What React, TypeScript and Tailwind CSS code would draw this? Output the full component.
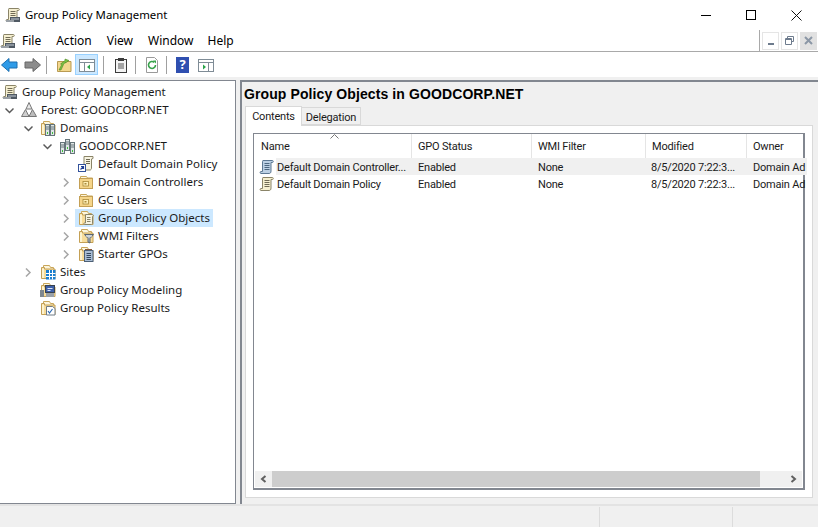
import type {ReactNode} from 'react'

const Icon = ({children, className = ''}: {children: ReactNode; className?: string}) => (
  <svg width="16" height="16" viewBox="0 0 16 16" className={`shrink-0 ${className}`}>
    {children}
  </svg>
)

const Scroll = ({fill = '#f5efd0', stroke = '#8a8468', line = '#6f6a55'}) => (
  <>
    <path d="M4 1.500h9.500c1 0 1 2 0 2H12V12c0 2-1 2.500-2 2.500H2c-1.200 0-1.200-2 0-2h1.500V3c0-1 .2-1.500.5-1.500z" fill={fill} stroke={stroke} />
    <path d="M5.500 4.500h5M5.500 6.500h5M5.500 8.500h5M5.500 10.500h5" stroke={line} />
  </>
)

const RootIcon = () => (
  <Icon>
    <Scroll />
    <rect x="5" y="10" width="10" height="5" fill="#4f5963" />
    <path d="M6 12h8" stroke="#c6ced6" />
    <rect x="1" y="13" width="8" height="2" fill="#9aa0a6" />
  </Icon>
)

const Folder = ({children, tone = '#f7dc9a'}: {children?: ReactNode; tone?: string}) => (
  <Icon>
    <path d="M3.500 1.500h6l1 2h3v3h-10z" fill="#fdf6dd" stroke="#c9a65a" />
    <path d="M1.500 3.500h3v1.500h10.500v9.500H1.500z" fill={tone} stroke="#c4a055" />
    <path d="M2 4.500v9.500h2V4.500z" fill="#fdf3d0" />
    {children}
  </Icon>
)

const ForestIcon = () => (
  <Icon>
    <path d="M8 .5l3 6.500H5z" fill="#e9e9e9" stroke="#777" />
    <path d="M4.500 7.500l3.500 7H.5z" fill="#cfcfcf" stroke="#777" />
    <path d="M11.500 7.500l4 7H8z" fill="#bdbdbd" stroke="#777" />
  </Icon>
)

const Server = ({x, y = 3}: {x: number; y?: number}) => (
  <g>
    <rect x={x + 0.5} y={y + 0.5} width="4" height={11} fill="#dfe6e6" stroke="#66757a" />
    <path d={`M${x + 1} ${y + 3}h3M${x + 1} ${y + 5}h3`} stroke="#66757a" />
    <rect x={x + 2} y={y + 8} width="1" height="2" fill="#3bc23b" />
  </g>
)

const DomainIcon = () => (
  <Icon>
    <Server x={1} y={4} />
    <Server x={6} y={1} />
    <Server x={11} y={4} />
  </Icon>
)

const DomainsIcon = () => (
  <Folder>
    <Server x={5} y={4} />
    <Server x={10} y={4} />
  </Folder>
)

const OuIcon = () => (
  <Icon>
    <path d="M2.500 2.500h6l1 1.500h5v2h-12z" fill="#fdf6dd" stroke="#c9a65a" />
    <rect x="1.500" y="4.500" width="13" height="10" fill="#f5d58a" stroke="#c4a055" />
    <rect x="5" y="7.500" width="5.500" height="4.500" fill="#fff0b8" stroke="#a98838" strokeWidth=".8" />
    <rect x="6.500" y="9" width="2" height="1.500" fill="#a98838" />
  </Icon>
)

const GpoFolderIcon = () => (
  <Folder>
    <path d="M7.500 4.500h7c1 0 1 2 0 2v6.500c0 1-.5 1.500-1 1.500H6.500c-1 0-1-1.500 0-1.500h1z" fill="#f7f4e2" stroke="#8a8468" />
    <path d="M9 7.500h3.500M9 9.500h3.500M9 11.500h3.500" stroke="#8a8468" />
  </Folder>
)

const WmiIcon = () => (
  <Folder>
    <path d="M6.500 6.500h9l-3.500 4v4.500l-2-1v-3.500z" fill="#b6bec7" stroke="#5b6670" />
    <path d="M8 8h6" stroke="#e6eaee" />
  </Folder>
)

const StarterIcon = () => (
  <Folder>
    <rect x="6.500" y="4.500" width="8.500" height="11" fill="#a9bdd4" stroke="#4c5f75" />
    <path d="M8.500 7.500h4.500M8.500 9.500h4.500M8.500 11.500h4.500M8.500 13.500h4.500" stroke="#33475e" />
    <path d="M7 3.500h7" stroke="#8a5a3c" />
  </Folder>
)

const SitesIcon = () => (
  <Folder>
    <rect x="6" y="6" width="9.500" height="9.500" fill="#1a7fd0" />
    <path d="M6 9.500h9.500M6 12.500h9.500M9.500 6v9.500M12.500 6v9.500" stroke="#fff" />
  </Folder>
)

const ModelingIcon = () => (
  <Folder>
    <rect x="5.500" y="3.500" width="9" height="7" fill="#3d5fa8" stroke="#39424d" />
    <path d="M7.500 6.500h5M7.500 8.500h3" stroke="#dbe5f5" />
    <rect x="0" y="8" width="4" height="7" fill="#7f888f" />
    <rect x="6" y="11" width="8" height="4" fill="#9aa1a8" />
  </Folder>
)

const ResultsIcon = () => (
  <Folder>
    <path d="M6.500 6.500h6l2.500 2v6.500H6.500z" fill="#fff" stroke="#6f7a85" />
    <path d="M8 11l1.500 2 3-4" fill="none" stroke="#2f6db5" strokeWidth="1.200" />
  </Folder>
)

const ShortcutGpoIcon = () => (
  <Icon>
    <path d="M6 .5h9v2l-1.500.5V12c0 1-.5 2-1.500 2H6z" fill="#f7f4e2" stroke="#8a8468" />
    <path d="M8 3.500h4M8 5.500h4M8 7.500h4" stroke="#6f6a55" />
    <rect x=".5" y="8.500" width="7" height="7" fill="#fff" stroke="#33529b" />
    <path d="M2.500 13.500l3-3M3 10.500h2.500v2.500" fill="none" stroke="#1f3f94" strokeWidth="1.200" />
  </Icon>
)

const Chevron = ({open}: {open?: boolean}) => (
  <svg width="9" height="9" viewBox="0 0 9 9" fill="none" strokeWidth="1.500" stroke={open ? '#5a5a5a' : '#a6a6a6'}>
    {open ? <path d="M.5 2.500l4 4 4-4" /> : <path d="M2 .5l4 4-4 4" />}
  </svg>
)

const indent = ['w-0', 'w-[19px] pr-[5px]', 'w-[38px] pr-[5px]', 'w-[57px] pr-[5px]', 'w-[76px] pr-[5px]']

const TreeRow = ({depth, label, icon, expand, selected}: {
  depth: number
  label: string
  icon: ReactNode
  expand?: 'open' | 'closed'
  selected?: boolean
}) => (
  <div className="flex h-[18px] items-center">
    <div className={`${indent[depth]} flex shrink-0 justify-end`}>
      {expand && <Chevron open={expand === 'open'} />}
    </div>
    <div className={`flex h-[18px] items-center gap-[4px] pl-[2px] pr-[3px] ${selected ? 'bg-[#cce8ff] -ml-px pl-[3px]' : ''}`}>
      {icon}
      <span className="whitespace-nowrap">{label}</span>
    </div>
  </div>
)

const columns = 'grid grid-cols-[158px_120px_114px_101px_60px]'

const HeaderCell = ({children, border = true, first}: {children: ReactNode; border?: boolean; first?: boolean}) => (
  <div className={`flex h-[24px] items-center overflow-hidden whitespace-nowrap pt-px ${first ? 'pl-[7px]' : 'pl-[6px]'} ${border ? 'border-r border-[#e5e5e5]' : ''}`}>
    {children}
  </div>
)

const Row = ({icon, name, shaded}: {icon: ReactNode; name: string; shaded?: boolean}) => (
  <div className={`${columns} h-[17px] items-center whitespace-nowrap`}>
    <div className="flex items-center gap-px pl-[5px]">
      {icon}
      <span className={`flex h-[17px] flex-1 items-center pl-px pt-px ${shaded ? 'bg-[#f0f0f0]' : ''}`}>{name}</span>
    </div>
    <div className={`flex h-[17px] items-center pl-[6px] pt-px ${shaded ? 'bg-[#f0f0f0]' : ''}`}>Enabled</div>
    <div className={`flex h-[17px] items-center pl-[6px] pt-px ${shaded ? 'bg-[#f0f0f0]' : ''}`}>None</div>
    <div className={`flex h-[17px] items-center pl-[5px] pt-px ${shaded ? 'bg-[#f0f0f0]' : ''}`}>8/5/2020 7:22:3...</div>
    <div className={`flex h-[17px] items-center pl-[6px] pt-px ${shaded ? 'bg-[#f0f0f0]' : ''}`}>Domain Ad</div>
  </div>
)

const Sep = () => <div className="mx-[5px] h-[18px] w-px bg-[#a0a0a0]" />

export default function App() {
  return (
    <div className="flex h-[527px] w-[818px] flex-col overflow-hidden bg-white font-['Noto_Sans',sans-serif] text-[11.500px] leading-none text-[#1a1a1a]">
      {/* title bar */}
      <div className="flex h-[30px] shrink-0 items-center pl-[5px] text-[11.400px] text-black">
        <RootIcon />
        <span className="ml-[4px]">Group Policy Management</span>
        <div className="ml-auto flex items-center pr-[16px]">
          <div className="h-px w-[10px] bg-black" />
          <div className="ml-[35px] h-[10px] w-[10px] border border-black" />
          <svg width="11" height="11" viewBox="0 0 11 11" className="ml-[35px]" stroke="#111">
            <path d="M.5.5l10 10M10.500.5l-10 10" />
          </svg>
        </div>
      </div>

      {/* menu bar */}
      <div className="flex h-[22px] shrink-0 items-center border-b border-[#a9a9a9] text-[12px] text-black">
        <RootIcon />
        <span className="ml-[6px]">File</span>
        <span className="ml-[15px]">Action</span>
        <span className="ml-[15px]">View</span>
        <span className="ml-[15px]">Window</span>
        <span className="ml-[14px]">Help</span>
        <div className="ml-auto flex h-[22px] items-center gap-[2px] border-l border-[#a9a9a9] pl-[2px] pr-px">
          <div className="flex h-[18px] w-[17px] items-end justify-center border border-[#e5e5e5] pb-[4px]">
            <div className="h-[2px] w-[6px] bg-[#6d7b8d]" />
          </div>
          <div className="flex h-[18px] w-[17px] items-center justify-center border border-[#e5e5e5]">
            <svg width="9" height="9" viewBox="0 0 9 9" fill="none" stroke="#6d7b8d">
              <path d="M2.500 2.500V.5h6v5H6.500M.5 2.500h6v6h-6zM.5 3.500h6" />
            </svg>
          </div>
          <div className="flex h-[18px] w-[17px] items-center justify-center bg-[#e1e1e1]">
            <svg width="9" height="9" viewBox="0 0 9 9" stroke="#8b97a6" strokeWidth="2">
              <path d="M1 1l7 7M8 1L1 8" />
            </svg>
          </div>
        </div>
      </div>

      {/* toolbar */}
      <div className="flex h-[25px] shrink-0 items-center pl-px">
        <svg width="17" height="16" viewBox="0 0 17 16">
          <path d="M.5 8L8 1.500V5h8v6H8v3.500z" fill="#2f9be8" stroke="#1c6fb0" />
        </svg>
        <svg width="17" height="16" viewBox="0 0 17 16" className="ml-[6px]">
          <path d="M16.500 8L9 1.500V5H1v6h8v3.500z" fill="#8c8c8c" stroke="#666" />
        </svg>
        <Sep />
        <div className="ml-[4px]">
          <Icon>
            <path d="M1.500 4.500h13.500v10H1.500z" fill="#f3d78d" stroke="#b99a52" />
            <path d="M3 13l3-6H4.500L9 3.500V2l4 1.500L9.500 6V5L7.500 7.500 5 13z" fill="#7cc144" stroke="#4d8a22" strokeWidth=".6" />
          </Icon>
        </div>
        <div className="ml-[3px] flex h-[21px] w-[23px] items-center justify-center border border-[#99d1ff] bg-[#cce8ff]">
          <Icon>
            <rect x=".5" y="2.500" width="15" height="12" fill="#fff" stroke="#7f8c96" />
            <path d="M1 5.500h14M5.500 6v8" stroke="#7f8c96" />
            <path d="M11 7.500v5l-3-2.500z" fill="#2aa34a" />
          </Icon>
        </div>
        <Sep />
        <div className="ml-[4px]">
          <Icon>
            <rect x="2.500" y="2.500" width="11" height="13" fill="#f3f3f3" stroke="#3c3c3c" />
            <rect x="5" y="1" width="6" height="3" fill="#3c3c3c" />
            <path d="M5 7h6M5 9h6M5 11h6" stroke="#555" />
          </Icon>
        </div>
        <div className="ml-[1px]"><Sep /></div>
        <div className="ml-[3px]">
          <Icon>
            <path d="M2.500.5h8l3 3v12h-11z" fill="#fff" stroke="#9a9a9a" />
            <path d="M11.500 8a3.500 3.500 0 1 1-1.200-2.700" fill="none" stroke="#36a24a" strokeWidth="1.600" />
            <path d="M9 3.500h3v3z" fill="#36a24a" />
          </Icon>
        </div>
        <div className="ml-[1px]"><Sep /></div>
        <div className="ml-[4px] flex h-[16px] w-[13px] items-center justify-center bg-[#2f4fb0] text-[13px] font-bold text-white">?</div>
        <div className="ml-[9px]">
          <Icon>
            <rect x=".5" y="2.500" width="15" height="12" fill="#fff" stroke="#7f8c96" />
            <path d="M1 5.500h14M10.500 6v8" stroke="#7f8c96" />
            <path d="M5 7.500v5l3-2.500z" fill="#2aa34a" />
          </Icon>
        </div>
      </div>

      {/* panes */}
      <div className="flex min-h-0 flex-1 flex-col bg-[#f0f0f0] pt-[3px]">
        <div className="flex min-h-0 flex-1">
          <div className="h-full w-[236px] shrink-0 border-b border-r border-t border-[#828790] bg-white pt-[2px]">
            <TreeRow depth={0} label="Group Policy Management" icon={<RootIcon />} />
            <TreeRow depth={1} label="Forest: GOODCORP.NET" icon={<ForestIcon />} expand="open" />
            <TreeRow depth={2} label="Domains" icon={<DomainsIcon />} expand="open" />
            <TreeRow depth={3} label="GOODCORP.NET" icon={<DomainIcon />} expand="open" />
            <TreeRow depth={4} label="Default Domain Policy" icon={<ShortcutGpoIcon />} />
            <TreeRow depth={4} label="Domain Controllers" icon={<OuIcon />} expand="closed" />
            <TreeRow depth={4} label="GC Users" icon={<OuIcon />} expand="closed" />
            <TreeRow depth={4} label="Group Policy Objects" icon={<GpoFolderIcon />} expand="closed" selected />
            <TreeRow depth={4} label="WMI Filters" icon={<WmiIcon />} expand="closed" />
            <TreeRow depth={4} label="Starter GPOs" icon={<StarterIcon />} expand="closed" />
            <TreeRow depth={2} label="Sites" icon={<SitesIcon />} expand="closed" />
            <TreeRow depth={2} label="Group Policy Modeling" icon={<ModelingIcon />} />
            <TreeRow depth={2} label="Group Policy Results" icon={<ResultsIcon />} />
          </div>
          <div className="ml-[4px] flex h-full min-w-0 flex-1 flex-col border-l-2 border-t-2 border-[#828790] pb-[6px] pl-[3px] pr-[5px] font-['Roboto',sans-serif] text-[11px] tracking-[-0.2px]">
            <div className="-ml-px h-[23px] pt-[5px] font-['Liberation_Sans',sans-serif] text-[14px] font-bold tracking-[0.1px] text-black">
              Group Policy Objects in GOODCORP.NET
            </div>
            <div className="flex h-[20px] items-end">
              <div className="z-10 -mb-px flex h-[20px] w-[57px] items-center justify-center border border-b-0 border-[#d9d9d9] bg-white pb-px">Contents</div>
              <div className="flex h-[18px] w-[59px] items-center justify-center border border-l-0 border-[#d9d9d9] bg-[#f0f0f0] pt-[2px]">Delegation</div>
            </div>
            <div className="min-h-0 flex-1 border border-[#d9d9d9] bg-white p-[7px]">
              <div className="flex h-full flex-col border-[#828790] [border-width:1px_2px_2px_1px]">
                <div className={`${columns} relative`}>
                  <svg width="9" height="5" viewBox="0 0 9 5" className="absolute left-[76px] top-0" fill="none" stroke="#777">
                    <path d="M.5 4.500l4-4 4 4" />
                  </svg>
                  <HeaderCell first>Name</HeaderCell>
                  <HeaderCell>GPO Status</HeaderCell>
                  <HeaderCell>WMI Filter</HeaderCell>
                  <HeaderCell>Modified</HeaderCell>
                  <HeaderCell border={false}>Owner</HeaderCell>
                </div>
                <Row name="Default Domain Controller..." shaded icon={<Icon><Scroll fill="#bcd0e4" stroke="#5d7893" line="#4c6680" /></Icon>} />
                <Row name="Default Domain Policy" icon={<Icon><Scroll /></Icon>} />
                <div className="flex-1" />
                <div className="mx-px mb-px flex h-[16px] items-center bg-[#f0f0f0]">
                  <div className="flex w-[17px] justify-center">
                    <svg width="7" height="8" viewBox="0 0 7 8" fill="none" stroke="#606060" strokeWidth="2">
                      <path d="M5.500 1L2 4l3.500 3" />
                    </svg>
                  </div>
                  <div className="h-full w-[488px] bg-[#cdcdcd]" />
                  <div className="flex flex-1 justify-center pl-[24px]">
                    <svg width="7" height="8" viewBox="0 0 7 8" fill="none" stroke="#606060" strokeWidth="2">
                      <path d="M1.500 1L5 4 1.500 7" />
                    </svg>
                  </div>
                </div>
              </div>
            </div>
          </div>
        </div>
      </div>

      {/* status bar */}
      <div className="flex h-[23px] shrink-0 border-t-2 border-[#e3e3e3] bg-[#f0f0f0] pt-px">
        <div className="w-[600px] border-r border-[#dcdcdc]" />
        <div className="w-[133px] border-r border-[#dcdcdc]" />
      </div>
    </div>
  )
}
